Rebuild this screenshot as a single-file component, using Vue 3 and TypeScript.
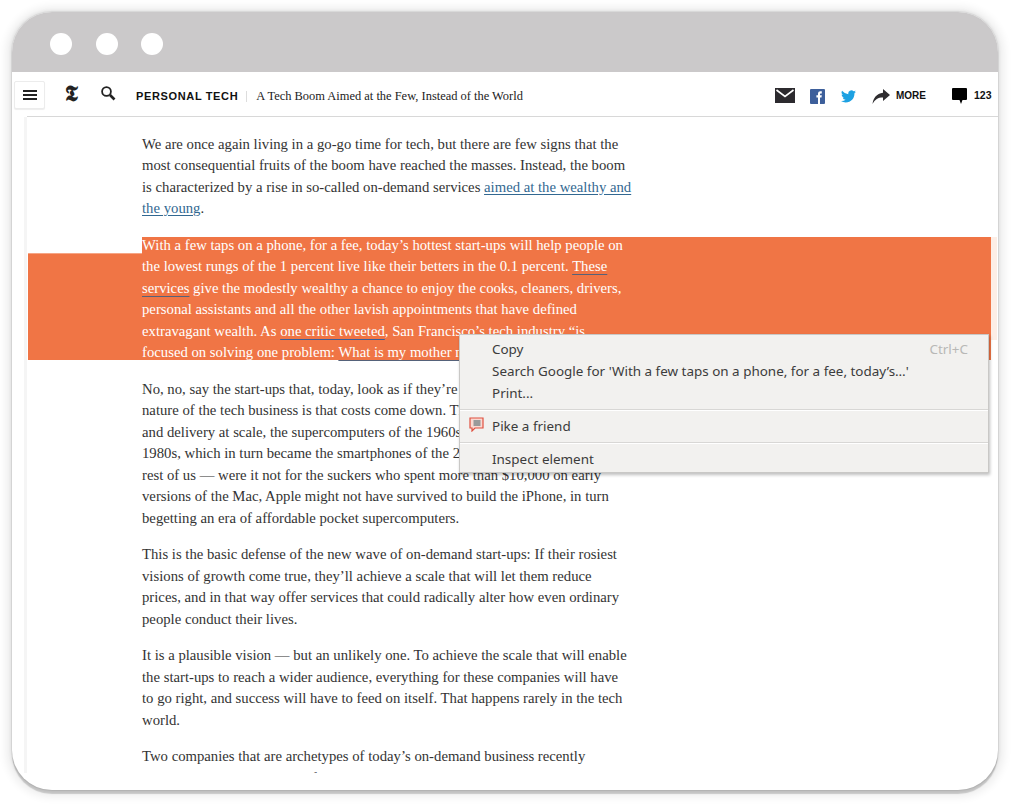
<script setup lang="ts">
interface MenuRow { label: string; hint?: string; icon?: boolean }
const groups: MenuRow[][] = [
  [
    { label: 'Copy', hint: 'Ctrl+C' },
    { label: "Search Google for 'With a few taps on a phone, for a fee, today’s…'" },
    { label: 'Print...' },
  ],
  [{ label: 'Pike a friend', icon: true }],
  [{ label: 'Inspect element' }],
]
</script>

<template>
  <div class="page">
    <div class="window">
      <div class="titlebar">
        <span class="dot"></span><span class="dot"></span><span class="dot"></span>
      </div>
      <header class="toolbar">
        <button class="burger" aria-label="Menu"><i></i><i></i><i></i></button>
        <span class="logo">𝕿</span>
        <svg class="search" width="16" height="16" viewBox="0 0 16 16">
          <circle cx="6.500" cy="6.500" r="4.400" fill="none" stroke="#222" stroke-width="1.800" />
          <path d="M10 10l4.500 4.500" stroke="#222" stroke-width="2.600" />
        </svg>
        <strong class="section">PERSONAL TECH</strong>
        <span class="pipe"></span>
        <span class="headline">A Tech Boom Aimed at the Few, Instead of the World</span>
        <div class="actions">
          <svg class="mail" width="20" height="15" viewBox="0 0 20 15">
            <rect width="20" height="15" fill="#2c2a2e" />
            <path d="M1.500 2l8.500 6.500L18.500 2" fill="none" stroke="#fff" stroke-width="1.600" />
          </svg>
          <svg class="fb" width="15" height="15" viewBox="0 0 15 15">
            <rect width="15" height="15" rx="1" fill="#3d5f9b" />
            <path d="M8 15V8.600H6.400V6.300H8V4.800C8 3.100 9 2.300 10.400 2.300h1.400v2.200h-.9c-.7 0-.9.300-.9.900v.900h1.800l-.3 2.300h-1.500V15z" fill="#fff" />
          </svg>
          <svg class="tw" width="15" height="13" viewBox="0 0 24 20">
            <path d="M24 2.400a10 10 0 0 1-2.800.8A5 5 0 0 0 23.300.5a10 10 0 0 1-3.100 1.200 4.900 4.900 0 0 0-8.400 4.500A14 14 0 0 1 1.700.9a4.900 4.900 0 0 0 1.500 6.600 4.900 4.900 0 0 1-2.200-.6c0 2.400 1.700 4.400 3.900 4.900a5 5 0 0 1-2.200.1 4.900 4.900 0 0 0 4.600 3.400A9.900 9.900 0 0 1 0 17.300 14 14 0 0 0 7.500 19.500c9.100 0 14.300-7.700 14-14.600A10 10 0 0 0 24 2.400z" fill="#1da1e2" />
          </svg>
          <svg class="share" width="18" height="15" viewBox="0 0 18 15">
            <path d="M11 0l7 6-7 6V8.400C6.500 8.300 3 10 .5 15 1 9.500 4.500 4.300 11 3.700z" fill="#2f2d30" />
          </svg>
          <b class="more">MORE</b>
          <svg class="bubble" width="15" height="16" viewBox="0 0 15 16">
            <path d="M1 0h13a1 1 0 0 1 1 1v10a1 1 0 0 1-1 1h-3.500L9 16l-1.500-4H1a1 1 0 0 1-1-1V1a1 1 0 0 1 1-1z" fill="#000" />
          </svg>
          <b class="count">123</b>
        </div>
      </header>

      <main class="article">
        <p>We are once again living in a go-go time for tech, but there are few signs that the<br>most consequential fruits of the boom have reached the masses. Instead, the boom<br>is characterized by a rise in so-called on-demand services <a class="link">aimed at the wealthy and<br>the young</a>.</p>

        <p class="selected">
          <span class="band band-main"></span>
          <span class="band band-left"></span>
          <span class="band band-pale"></span>
          <span class="sel-text">With a few taps on a phone, for a fee, today’s hottest start-ups will help people on<br>the lowest rungs of the 1 percent live like their betters in the 0.1 percent. <a class="sel-link">These<br>services</a> give the modestly wealthy a chance to enjoy the cooks, cleaners, drivers,<br>personal assistants and all the other lavish appointments that have defined<br>extravagant wealth. As <a class="sel-link blue">one critic tweeted</a>, San Francisco’s tech industry “is<br>focused on solving one problem: <a class="sel-link">What is my mother no longer doing for me?”</a></span>
        </p>

        <p>No, no, say the start-ups that, today, look as if they’re catering to the rich. The<br>nature of the tech business is that costs come down. Through better engineering<br>and delivery at scale, the supercomputers of the 1960s became the desktops of the<br>1980s, which in turn became the smartphones of the 2000s. And so where would the<br>rest of us — were it not for the suckers who spent more than $10,000 on early<br>versions of the Mac, Apple might not have survived to build the iPhone, in turn<br>begetting an era of affordable pocket supercomputers.</p>

        <p>This is the basic defense of the new wave of on-demand start-ups: If their rosiest<br>visions of growth come true, they’ll achieve a scale that will let them reduce<br>prices, and in that way offer services that could radically alter how even ordinary<br>people conduct their lives.</p>

        <p>It is a plausible vision — but an unlikely one. To achieve the scale that will enable<br>the start-ups to reach a wider audience, everything for these companies will have<br>to go right, and success will have to feed on itself. That happens rarely in the tech<br>world.</p>

        <p>Two companies that are archetypes of today’s on-demand business recently<br>illustrate the thesis: both are finding that their businesses will be hard to scale.</p>
      </main>

      <div class="menu">
        <template v-for="(group, g) in groups" :key="g">
          <hr v-if="g > 0" class="sep" />
          <div v-for="row in group" :key="row.label" class="row">
            <svg v-if="row.icon" class="pike" width="15" height="15" viewBox="0 0 15 15">
              <path d="M1 1h13v10H6l-3 3v-3H1z" fill="#f9d9d2" stroke="#e0503f" stroke-width="1.200" />
              <rect x="4.500" y="3" width="7" height="6" fill="#9a9a9a" />
            </svg>
            <span>{{ row.label }}</span>
            <span v-if="row.hint" class="hint">{{ row.hint }}</span>
          </div>
        </template>
      </div>
    </div>
  </div>
</template>

<style>
html, body { margin: 0; background: #fff; }
</style>

<style scoped>
.page {
  width: 1024px;
  height: 805px;
  box-sizing: border-box;
  display: flex;
  padding: 12px 26px 15px 12px;
  background: #fff;
  overflow: hidden;
}
.window {
  position: relative;
  flex: 1;
  display: flex;
  flex-direction: column;
  background: #fff;
  border-radius: 40px;
  overflow: hidden;
  box-shadow:
    0 0 0 1px rgba(0,0,0,.05),
    0 4px 1px rgba(0,0,0,.17),
    0 0 3px 2px rgba(0,0,0,.05),
    0 1px 8px 6px rgba(0,0,0,.07);
}
.titlebar {
  flex: none;
  height: 60px;
  box-sizing: border-box;
  background: #cbc9ca;
  display: flex;
  align-items: center;
  gap: 23.500px;
  padding: 3px 0 0 38px;
}
.dot { width: 22px; height: 22px; border-radius: 50%; background: #fff; }
.toolbar {
  flex: none;
  height: 45px;
  position: relative;
  display: flex;
  align-items: center;
  padding-left: 2px;
  background: linear-gradient(#d8d8d8, #d8d8d8) 15px 100% / 100% 1px no-repeat;
}
.burger {
  width: 31px;
  height: 28px;
  margin-top: 1px;
  box-sizing: border-box;
  padding: 0;
  background: #fff;
  border: 1px solid #ececec;
  border-radius: 2px;
  box-shadow: 0 1px 1px rgba(0,0,0,.07);
  display: flex;
  flex-direction: column;
  align-items: center;
  justify-content: center;
  gap: 2px;
}
.burger i { display: block; width: 14px; height: 2px; background: #222; }
.logo {
  width: 17px;
  margin-left: 18px;
  text-align: center;
  font: 700 21px/1 "DejaVu Sans", "DejaVu Serif", serif;
  color: #222;
}
.search { margin-left: 20px; margin-top: -3px; }
.section {
  margin-left: 20px;
  margin-top: 3px;
  font: 700 11px/1 "Liberation Sans", sans-serif;
  letter-spacing: .64px;
  color: #111;
  white-space: nowrap;
}
.pipe { width: 1px; height: 11px; margin: 3px 9px 0 8px; background: #ddd; }
.headline {
  margin-top: 3px;
  font: 12.440px/1 "Liberation Serif", serif;
  color: #222;
  white-space: nowrap;
}
.actions {
  position: absolute;
  left: 763px;
  top: 16px;
  display: flex;
  align-items: flex-start;
}
.fb { margin-left: 15px; margin-top: 1px; }
.tw { margin-left: 16px; margin-top: 2px; }
.share { margin-left: 16px; margin-top: 1px; }
.more {
  margin-left: 6px; margin-top: 3px;
  font: 700 10px/1 "Liberation Sans", sans-serif;
  color: #111;
}
.bubble { margin-left: 26px; margin-top: 0; }
.count {
  margin-left: 7px; margin-top: 2px;
  font: 700 10.500px/1 "Liberation Sans", sans-serif;
  color: #111;
}
.article {
  flex: 1;
  min-height: 0;
  margin: 0 0 17.500px 12px;
  border-left: 3px solid #f5f5f5;
  padding: 16.500px 0 0 115px;
  overflow: hidden;
  font: 14.720px/21.500px "Liberation Serif", serif;
  color: #333;
  white-space: nowrap;
}
.article p { margin: 0 0 15px; position: relative; }
.link { color: #326891; text-decoration: underline; text-decoration-color: #326891; text-underline-offset: 2px; }
.sel-text { position: relative; color: #fff; }
.sel-link { text-decoration: underline; text-decoration-color: #55627a; text-underline-offset: 2.500px; text-decoration-skip-ink: none; }
.sel-link.blue { text-decoration-color: #3a5f98; }
.band { position: absolute; background: #f07545; }
.band-main { left: 0; top: 2px; width: 849px; height: 123px; }
.band-left { left: -114px; top: 18px; width: 114px; height: 107px; border-top: 1px solid #f6a585; box-sizing: border-box; }
.band-pale { left: 849px; top: 2px; width: 6px; height: 103px; background: #fdeee6; }
.menu {
  position: absolute;
  left: 447px;
  top: 322px;
  width: 530px;
  box-sizing: border-box;
  padding: 3px 0 2px;
  background: #f2f1ef;
  border: 1px solid #c9c8c6;
  box-shadow: 1px 2px 3px rgba(0,0,0,.25);
  font: 13.450px/22px "Noto Sans", sans-serif;
  color: #3c3c3c;
}
.row {
  position: relative;
  height: 22px;
  padding: 0 20px 0 32px;
  display: flex;
  justify-content: space-between;
}
.hint { color: #b8b8b6; }
.pike { position: absolute; left: 9px; top: 2px; }
.sep {
  margin: 4.500px 0;
  height: 2px;
  border: 0;
  box-sizing: border-box;
  border-top: 1px solid #d8d7d5;
  border-bottom: 1px solid #fff;
}
</style>
